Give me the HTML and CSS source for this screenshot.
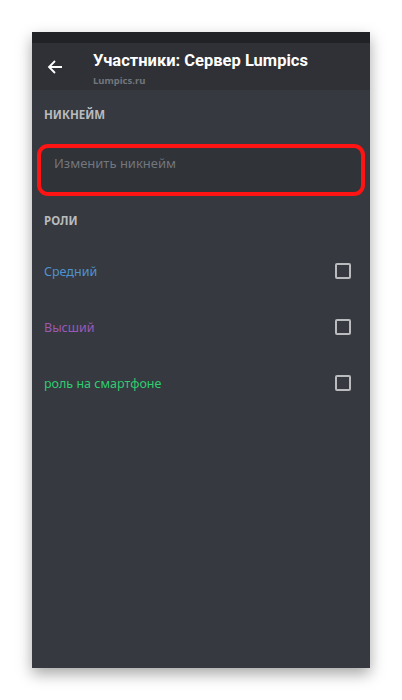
FILE: index.html
```html
<!DOCTYPE html>
<html lang="ru">
<head>
    <meta charset="UTF-8">
    <meta name="viewport" content="width=device-width, initial-scale=1.0">
    <title>Участники: Сервер Lumpics</title>
    <link rel="stylesheet" href="styles.css">
</head>
<body>
    <div class="phone">
        <div class="status-bar"></div>
        <div class="header">
            <svg class="back" width="16" height="16" viewBox="0 0 16 16">
                <path d="M15 8H2M8 2L2 8l6 6" fill="none" stroke="#fff" stroke-width="1.8"/>
            </svg>
            <div class="titles">
                <div class="title">Участники: Сервер Lumpics</div>
                <div class="subtitle">Lumpics.ru</div>
            </div>
        </div>
        <div class="content">
            <div class="section-label nick-label">НИКНЕЙМ</div>
            <div class="highlight">
                <input type="text" class="nick-input" placeholder="Изменить никнейм">
            </div>
            <div class="section-label roles-label">РОЛИ</div>
            <div class="role">
                <span class="role-name blue">Средний</span>
                <span class="checkbox"></span>
            </div>
            <div class="role">
                <span class="role-name purple">Высший</span>
                <span class="checkbox"></span>
            </div>
            <div class="role">
                <span class="role-name green">роль на смартфоне</span>
                <span class="checkbox"></span>
            </div>
        </div>
    </div>
</body>
</html>
```

FILE: styles.css
```css
html, body {
    height: 700px;
    overflow: hidden;
}
body {
    margin: 0;
    padding: 32px 0 0 32px;
    box-sizing: border-box;
    background-color: #ffffff;
    font-family: 'Noto Sans', 'Open Sans', sans-serif;
}
.phone {
    width: 338px;
    height: 636px;
    display: flex;
    flex-direction: column;
    background-color: #36393f;
    box-shadow: 0 6px 14px rgba(0, 0, 0, 0.35);
}
.status-bar {
    height: 11px;
    flex: none;
    background-color: #202225;
}
.header {
    height: 47px;
    flex: none;
    display: flex;
    align-items: flex-start;
    background-color: #2f3136;
}
.back {
    margin: 16px 0 0 15px;
}
.titles {
    margin: 8px 0 0 30px;
}
.title {
    color: #ffffff;
    font-family: Roboto, 'Noto Sans', sans-serif;
    font-size: 16.5px;
    font-weight: bold;
    line-height: 20px;
}
.subtitle {
    margin-top: 4px;
    color: #72767d;
    font-size: 9.5px;
    font-weight: bold;
    line-height: 12px;
}
.content {
    flex: 1;
}
.section-label {
    color: #b9bbbe;
    font-size: 11.5px;
    font-weight: bold;
    line-height: 16px;
    padding-left: 12px;
}
.nick-label {
    margin-top: 17px;
}
.highlight {
    margin: 21px 5px 0 5px;
    height: 44px;
    border: 4px solid #ff1414;
    border-radius: 11px;
    background-color: #303338;
    display: flex;
}
.nick-input {
    flex: 1;
    border: none;
    outline: none;
    background: transparent;
    padding: 0 0 14px 13px;
    font-family: inherit;
    font-size: 13px;
    color: #dcddde;
}
.nick-input::placeholder {
    color: #72767d;
}
.roles-label {
    margin-top: 17px;
}
.role {
    height: 56px;
    display: flex;
    align-items: center;
    justify-content: space-between;
    padding: 0 19px 0 12px;
}
.roles-label + .role {
    margin-top: 14px;
}
.role-name {
    font-size: 12.5px;
}
.blue {
    color: #4f93ce;
}
.purple {
    color: #9b59b6;
}
.green {
    color: #2ecc71;
}
.checkbox {
    width: 12px;
    height: 12px;
    border: 2px solid #b9bbbe;
    border-radius: 2px;
}
```
